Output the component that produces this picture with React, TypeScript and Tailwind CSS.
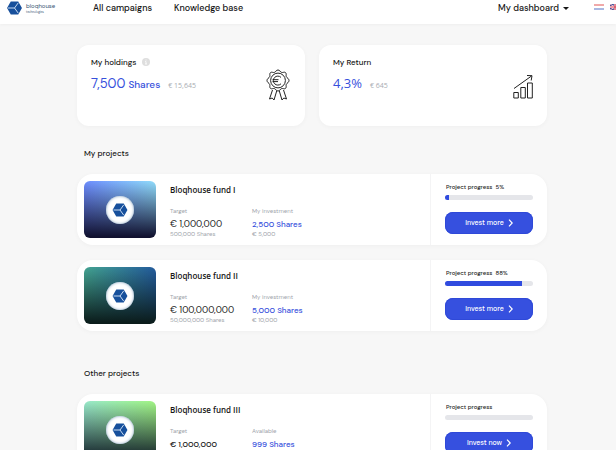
import React from "react";

const dmSans = "font-['DM_Sans','Inter',sans-serif]";
const openSans = "font-['Open_Sans','Noto_Sans',sans-serif]";

function Cube({ className }: { className: string }) {
  return (
    <svg viewBox="0 0 32 30" className={className} aria-hidden="true">
      <path d="M8 1h16l8 14-8 14H8L0 15z" fill="#17509c" />
      <path d="M2 15h14M16 15l8-11M16 15l8 11" stroke="#d5e5f8" strokeWidth="2" fill="none" />
    </svg>
  );
}

function Award() {
  return (
    <svg viewBox="0 0 24 32" className="h-8 w-6" fill="none" stroke="#222" strokeWidth="1" aria-hidden="true">
      <path d="M12 1c1.800 0 2.200 1.900 3.600 2.400s2.800-.9 4 .3.100 2.700.7 4 2.700 1.800 2.700 3.800-2.100 2.500-2.700 3.800.5 2.800-.7 4-2.600-.2-4 .3-1.800 2.400-3.600 2.400-2.200-1.900-3.600-2.400-2.800.9-4-.3-.1-2.700-.7-4S1 13.500 1 11.500s2.100-2.500 2.700-3.800-.5-2.800.7-4 2.600.2 4-.3S10.200 1 12 1z" />
      <circle cx="12" cy="11.500" r="7.400" />
      <path d="M15 8.400a4.500 4.500 0 1 0 0 6.400M6.500 10.700h6M6.500 12.600h5.500" />
      <path d="M6.500 21L3.500 30l2.700-1 1.800 2 2.700-9M17.500 21l3 9-2.700-1-1.800 2-2.700-9" />
    </svg>
  );
}

function Growth() {
  return (
    <svg viewBox="0 0 20 25" className="h-[25px] w-5" fill="none" stroke="#222" strokeWidth="1" aria-hidden="true">
      <path d="M.8 18.500h4.500v5.500H.8zM7.800 13.500h4.500V24H7.800zM14.500 9h4.800v15h-4.800z" />
      <path d="M1 14.500L18.500 2M14 1.500l5 .2-.8 4.800" />
    </svg>
  );
}

function Flag({ code }: { code: "nl" | "en" }) {
  return code === "nl" ? (
    <svg viewBox="0 0 10 6" className="h-[6px] w-[10px]" aria-hidden="true">
      <path d="M0 0h10v2H0z" fill="#f0a9a9" />
      <path d="M0 2h10v2H0z" fill="#fff" />
      <path d="M0 4h10v2H0z" fill="#a9b8e2" />
    </svg>
  ) : (
    <svg viewBox="0 0 10 6" className="h-[6px] w-[10px]" aria-hidden="true">
      <path d="M0 0h10v6H0z" fill="#41549c" />
      <path d="M0 0l10 6M10 0L0 6" stroke="#f1c3cc" strokeWidth="1" />
      <path d="M5 0v6M0 3h10" stroke="#fff" strokeWidth="2.200" />
      <path d="M5 0v6M0 3h10" stroke="#d33b50" strokeWidth="1.200" />
    </svg>
  );
}

function Chevron() {
  return (
    <svg viewBox="0 0 5 8" className="h-2 w-[5px]" fill="none" stroke="white" strokeWidth="1.200" aria-hidden="true">
      <path d="M1 .7L4.200 4 1 7.300" />
    </svg>
  );
}

type Project = {
  name: string;
  target: string;
  targetShares?: string;
  label: string;
  shares: string;
  value?: string;
  progress: number | null;
  action: string;
  art: string;
};

const mine: Project[] = [
  {
    name: "Bloqhouse fund I",
    target: "€ 1,000,000",
    targetShares: "500,000 Shares",
    label: "My investment",
    shares: "2,500 Shares",
    value: "€ 5,000",
    progress: 5,
    action: "Invest more",
    art: "bg-[linear-gradient(to_bottom,transparent,#11112f_98%),linear-gradient(to_right,#6d8dff,#91ddfb)]",
  },
  {
    name: "Bloqhouse fund II",
    target: "€ 100,000,000",
    targetShares: "50,000,000 Shares",
    label: "My investment",
    shares: "5,000 Shares",
    value: "€ 10,000",
    progress: 88,
    action: "Invest more",
    art: "bg-[linear-gradient(to_bottom,transparent,#0b1c1b_98%),linear-gradient(to_right,#44a592,#235b9d)]",
  },
];

const others: Project[] = [
  {
    name: "Bloqhouse fund III",
    target: "€ 1,000,000",
    label: "Available",
    shares: "999 Shares",
    progress: null,
    action: "Invest now",
    art: "bg-[linear-gradient(to_bottom,transparent,#16252c_98%),linear-gradient(to_right,#99e9cb,#a2f584)]",
  },
];

function ProjectCard({ project }: { project: Project }) {
  const invested = project.progress !== null;
  return (
    <article className="flex min-h-[71px] rounded-2xl bg-white shadow-[0_1px_5px_#00000009]">
      <div className="flex flex-1 gap-[14px] py-[7px] pl-[7px]">
        <div className={`flex h-[57px] w-[72px] items-center justify-center rounded-md ${project.art}`}>
          <div className="flex size-7 items-center justify-center rounded-full bg-white shadow-[inset_0_0_3px_#7d9ebd]">
            <Cube className="h-[14px] w-4" />
          </div>
        </div>
        <div className="flex flex-col pt-[3px]">
          <h3 className={`${openSans} text-[8px] leading-3 font-semibold text-[#161616]`}>{project.name}</h3>
          <div className="mt-[9px] flex">
            <dl className="w-[82px] whitespace-nowrap">
              <dt className="text-[6px] leading-[13px] text-[#a0a4aa]">Target</dt>
              <dd className={`leading-3 text-[#161616] ${invested ? "text-[9px]" : "text-[8px] font-medium"}`}>{project.target}</dd>
              <dd className="text-[6px] leading-2 text-[#a0a4aa]">{project.targetShares}</dd>
            </dl>
            <dl className="whitespace-nowrap">
              <dt className="text-[6px] leading-[13px] text-[#a0a4aa]">{project.label}</dt>
              <dd className="text-[8px] leading-3 font-medium text-[#3650dc]">{project.shares}</dd>
              <dd className="text-[6px] leading-2 text-[#a0a4aa]">{project.value}</dd>
            </dl>
          </div>
        </div>
      </div>
      <div className="w-[117px] border-l border-[#f4f4f5] px-[14px] pt-2">
        <p className="pl-px text-[6px] leading-[10px] font-medium whitespace-pre text-[#222]">
          Project progress{invested && `  ${project.progress}%`}
        </p>
        <div className="mt-[3px] h-[5px] overflow-hidden rounded-full bg-[#e5e6ea]">
          <div className="h-full bg-[#304bdf]" style={{ width: `${project.progress ?? 0}%` }} />
        </div>
        <button
          type="button"
          className="mt-3 flex h-[22px] w-full items-center justify-center gap-1 rounded-lg bg-[#3650df] text-[7px] font-medium text-white shadow-[inset_0_0_0_1px_#2f49d8]"
        >
          {project.action}
          <Chevron />
        </button>
      </div>
    </article>
  );
}

export default function App() {
  return (
    <div className={`${dmSans} h-screen overflow-hidden bg-[#f7f7f7] text-[#161616]`}>
      <header className="flex h-6 items-start bg-white pl-[7px] shadow-[0_1px_3px_#0000000a]">
        <a href="#home" className="flex w-[86px] items-center gap-1 pt-px">
          <Cube className="h-[14px] w-[15px]" />
          <span className="text-[#355273]">
            <span className="block text-[6px] leading-2">bloqhouse</span>
            <span className="block text-[3px] leading-1">technologies</span>
          </span>
        </a>
        <nav className="flex gap-[22px] text-[9px] leading-4 font-medium">
          <a href="#campaigns">All campaigns</a>
          <a href="#knowledge">Knowledge base</a>
        </nav>
        <button type="button" className="ml-auto flex items-center gap-1 text-[9px] leading-4 font-medium">
          My dashboard
          <svg viewBox="0 0 6 3" className="h-[3px] w-[6px]" aria-hidden="true">
            <path d="M0 0h6L3 3z" fill="#161616" />
          </svg>
        </button>
        <div className="-mr-1 ml-[25px] flex gap-[6px] pt-1">
          <button type="button" aria-label="Nederlands"><Flag code="nl" /></button>
          <button type="button" aria-label="English"><Flag code="en" /></button>
        </div>
      </header>

      <main className="pt-[21px] pr-[69px] pl-[77px]">
        <div className="grid grid-cols-2 gap-[14px]">
          <section className="flex h-[81px] justify-between rounded-xl bg-white pt-[11px] pr-[15px] pl-[14px] shadow-[0_1px_5px_#00000009]">
            <div>
              <h2 className="flex items-center gap-[6px] text-[8px] leading-3 font-medium">
                My holdings
                <svg viewBox="0 0 8 8" className="size-2" aria-hidden="true">
                  <circle cx="4" cy="4" r="4" fill="#dedede" />
                  <path d="M4 1.500v1M3.200 3.500H4v2.500M3 6h2" stroke="white" strokeWidth=".8" fill="none" />
                </svg>
              </h2>
              <p className="mt-2 flex items-baseline text-[#3650dc]">
                <span className="text-[13px] leading-4">7,500</span>
                <span className="ml-[3px] text-[10px] leading-4 font-medium">Shares</span>
                <span className={`${openSans} ml-2 text-[7px] leading-4 text-[#a8acb2]`}>€ 15,645</span>
              </p>
            </div>
            <div className="pt-[13px]"><Award /></div>
          </section>
          <section className="flex h-[81px] justify-between rounded-xl bg-white pt-[11px] pr-[14px] pl-[14px] shadow-[0_1px_5px_#00000009]">
            <div>
              <h2 className="text-[8px] leading-3 font-medium">My Return</h2>
              <p className={`${openSans} mt-[7px] flex items-baseline text-[#3650dc]`}>
                <span className="text-[13px] leading-4 font-medium">4,3%</span>
                <span className="ml-2 text-[7px] leading-4 text-[#a8acb2]">€ 645</span>
              </p>
            </div>
            <div className="pt-[18px]"><Growth /></div>
          </section>
        </div>

        <h2 className="mt-[21px] ml-[7px] text-[8px] leading-3 font-medium">My projects</h2>
        <div className="mt-[15px] flex flex-col gap-[15px]">
          {mine.map((p) => <ProjectCard key={p.name} project={p} />)}
        </div>

        <h2 className="mt-9 ml-[7px] text-[8px] leading-3 font-medium">Other projects</h2>
        <div className="mt-[15px] flex flex-col gap-[15px]">
          {others.map((p) => <ProjectCard key={p.name} project={p} />)}
        </div>
      </main>
    </div>
  );
}
